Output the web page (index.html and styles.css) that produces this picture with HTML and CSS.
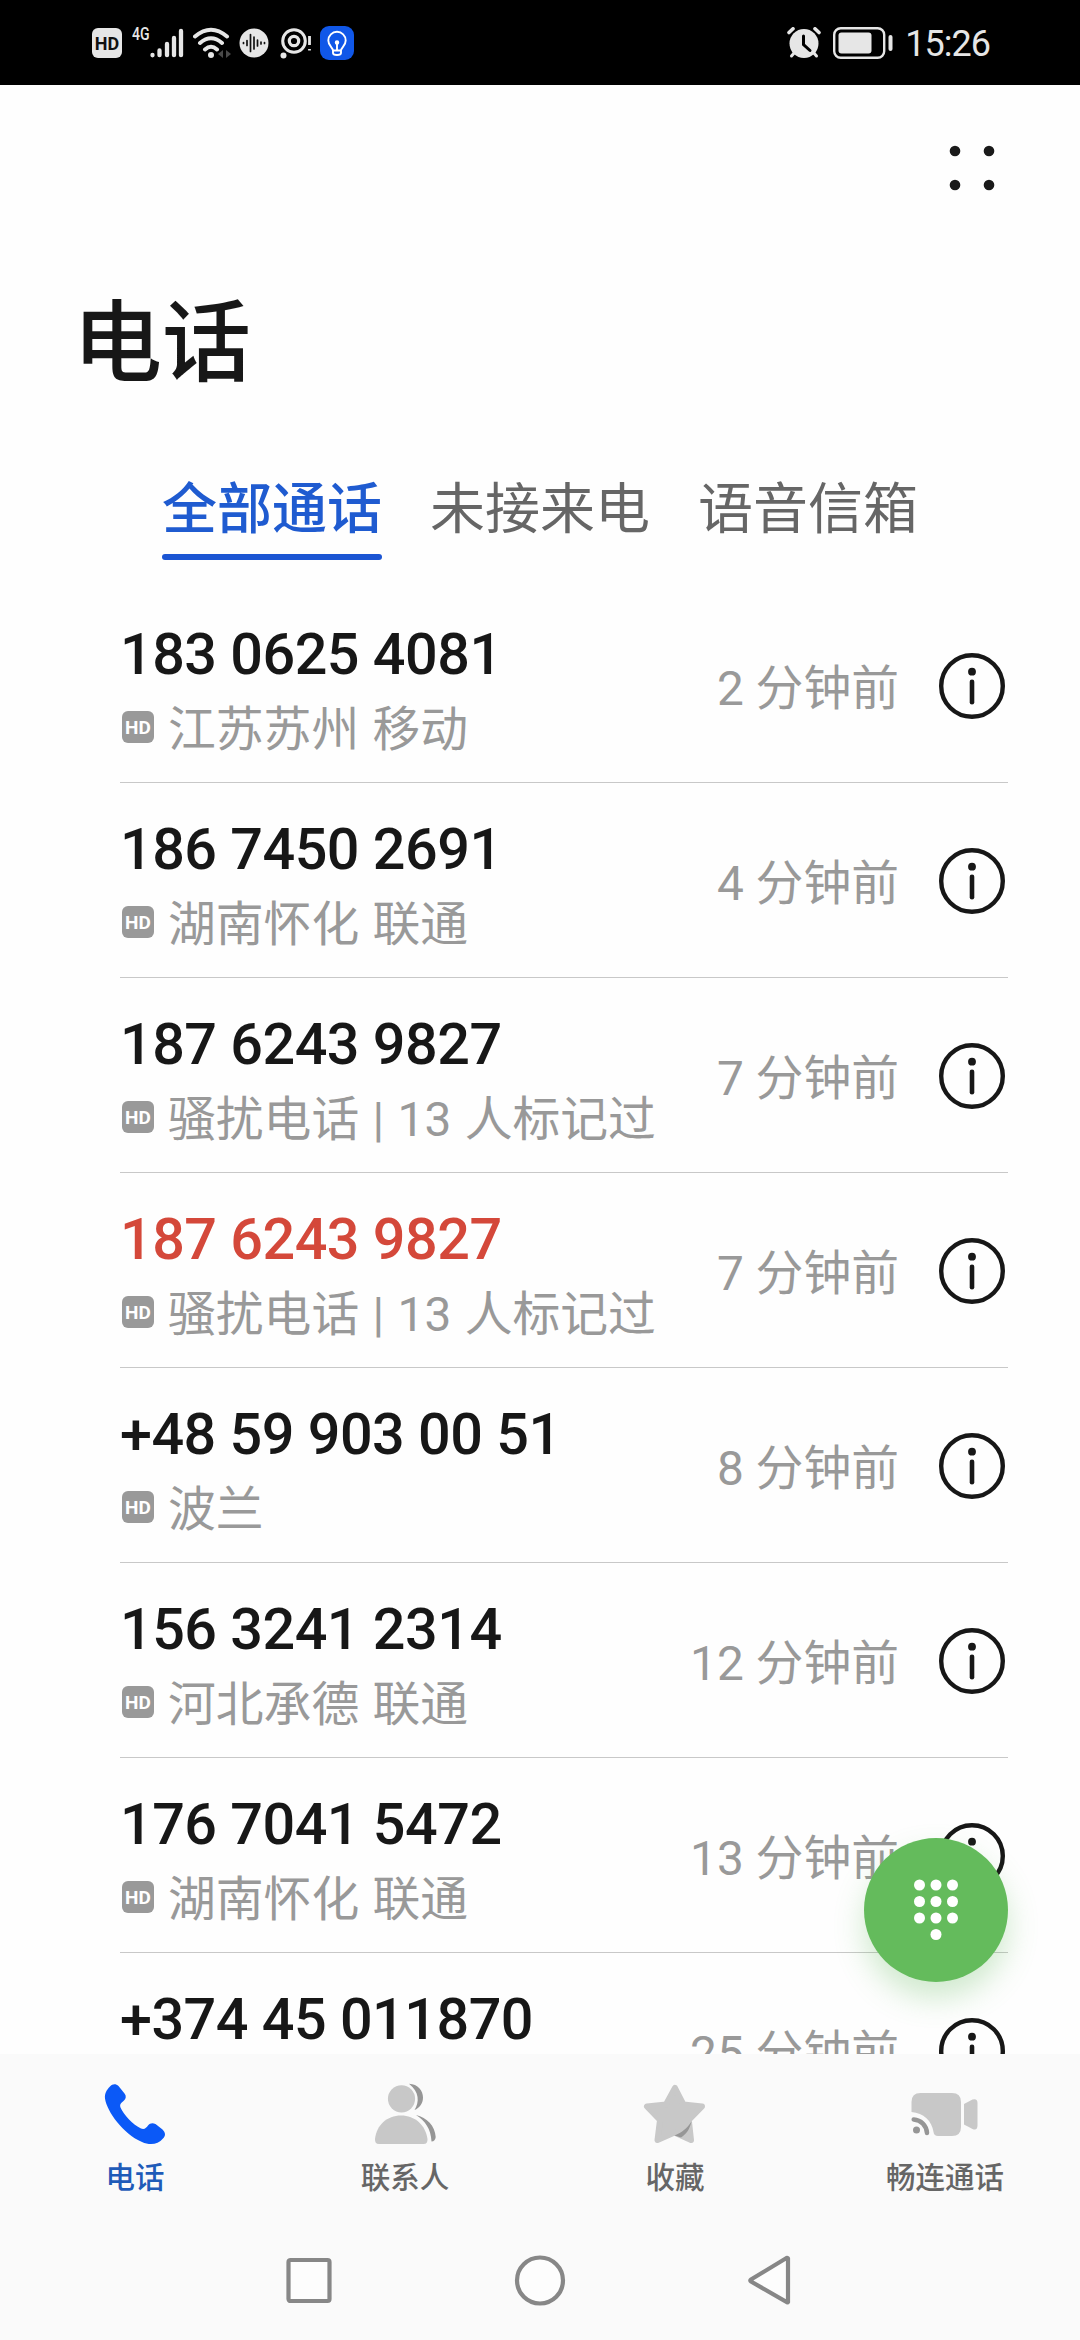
FILE: index.html
```html
<!DOCTYPE html>
<html lang="zh-CN">
<head>
    <meta charset="utf-8"/>
    <title>电话</title>
    <link rel="stylesheet" href="styles.css">
</head>
<body>
<svg class="symbols">
    <symbol id="info" viewBox="0 0 66 66">
        <circle cx="33" cy="33" r="30.8" fill="none" stroke="#171717" stroke-width="4.4"/>
        <circle cx="33" cy="18.7" r="3.9" fill="#171717"/>
        <path d="M33 28.8v20.4" stroke="#171717" stroke-width="4.6" stroke-linecap="round"/>
    </symbol>
</svg>
<div class="phone">
    <div class="status-bar">
        <div class="status-left">
            <span class="status-hd">HD</span>
            <span class="network">4G</span>
            <svg class="signal" width="34" height="32" viewBox="0 0 34 32" stroke="#e6e6e6" stroke-width="4.3" stroke-linecap="round">
                <path d="M2.5 29v.3M9.5 24.500v4.700M17 18v11.200M24 12v17.200M31 5v24.200"/>
            </svg>
            <svg class="wifi" width="40" height="32" viewBox="0 0 40 32" fill="none" stroke="#e6e6e6" stroke-width="4" stroke-linecap="round">
                <path d="M2 9.500Q18 -4 34 9.500M7 16Q18 6.500 29 16M12 22.500Q18 17 24 22.500"/>
                <circle cx="18" cy="28" r="3" fill="#e6e6e6" stroke="none"/>
                <path d="M30 23v8l-5-4zM33 23v8l5-4z" fill="#4a4a4a" stroke="none"/>
            </svg>
            <svg class="wave" width="30" height="30" viewBox="0 0 30 30">
                <circle cx="15" cy="15" r="14.500" fill="#e6e6e6"/>
                <path d="M4.500 14.500v1M8 12.500v5M11.500 6.500v17M15 9v12M18.500 12v6M22 14v2M25.500 14.500v1" stroke="#111" stroke-width="1.700" stroke-linecap="round"/>
            </svg>
            <svg class="eye" width="32" height="32" viewBox="0 0 32 32" fill="none" stroke="#e6e6e6">
                <circle cx="14" cy="14" r="11.300" stroke-width="3"/>
                <circle cx="14" cy="14" r="4.700" stroke-width="3.200"/>
                <circle cx="3.500" cy="28.500" r="3" fill="#e6e6e6" stroke="none"/>
                <path d="M29.500 9v9M29.500 22v1.500" stroke-width="2.800"/>
            </svg>
            <svg class="bulb" width="34" height="34" viewBox="0 0 34 34">
                <rect width="34" height="34" rx="9" fill="#1057e8"/>
                <g fill="none" stroke="#fff" stroke-width="1.900" stroke-linecap="round" stroke-linejoin="round">
                    <path d="M13 24.500c0-3-4.700-4.500-4.700-10a8.700 8.700 0 0 1 17.400 0c0 5.500-4.700 7-4.700 10zM13 24.500v2.500q0 2 4 2t4-2v-2.500M17 17.500v6.500"/>
                    <circle cx="17" cy="16.500" r="1.300" fill="#fff"/>
                </g>
            </svg>
        </div>
        <div class="status-right">
            <svg width="34" height="32" viewBox="0 0 34 32" stroke-linecap="round">
                <path d="M2 5.500l4-3.700M32 5.500l-4-3.700" stroke="#e6e6e6" stroke-width="3.600"/>
                <path d="M8 25l-3.500 4M26 25l3.500 4" stroke="#e6e6e6" stroke-width="3"/>
                <circle cx="17" cy="16.500" r="14.500" fill="#e6e6e6"/>
                <path d="M16.500 9v8.500l6.500 6" fill="none" stroke="#000" stroke-width="3"/>
            </svg>
            <svg width="60" height="34" viewBox="0 0 60 34">
                <rect x="1.200" y="2.200" width="50" height="29.600" rx="6.500" fill="none" stroke="#e6e6e6" stroke-width="2.400"/>
                <rect x="5.500" y="6.500" width="33" height="21" rx="3" fill="#e6e6e6"/>
                <rect x="55.500" y="9" width="4" height="16" rx="2" fill="#e6e6e6"/>
            </svg>
            <span class="clock">15:26</span>
        </div>
    </div>

    <div class="header">
        <svg class="more" width="46" height="46" viewBox="0 0 46 46" fill="#1a1a1a">
            <circle cx="6" cy="6" r="5.300"/>
            <circle cx="40" cy="6" r="5.300"/>
            <circle cx="6" cy="40" r="5.300"/>
            <circle cx="40" cy="40" r="5.300"/>
        </svg>
        <h1>电话</h1>
    </div>

    <div class="tabs">
        <span class="tab active">全部通话</span>
        <span class="tab">未接来电</span>
        <span class="tab">语音信箱</span>
    </div>

    <div class="calls">
        <div class="call">
            <div class="caller">
                <div class="number">183 0625 4081</div>
                <div class="place"><span class="hd">HD</span>江苏苏州 移动</div>
            </div>
            <span class="time">2 分钟前</span>
            <svg class="info"><use href="#info"/></svg>
        </div>
        <div class="call">
            <div class="caller">
                <div class="number">186 7450 2691</div>
                <div class="place"><span class="hd">HD</span>湖南怀化 联通</div>
            </div>
            <span class="time">4 分钟前</span>
            <svg class="info"><use href="#info"/></svg>
        </div>
        <div class="call">
            <div class="caller">
                <div class="number">187 6243 9827</div>
                <div class="place"><span class="hd">HD</span>骚扰电话 | 13 人标记过</div>
            </div>
            <span class="time">7 分钟前</span>
            <svg class="info"><use href="#info"/></svg>
        </div>
        <div class="call missed">
            <div class="caller">
                <div class="number">187 6243 9827</div>
                <div class="place"><span class="hd">HD</span>骚扰电话 | 13 人标记过</div>
            </div>
            <span class="time">7 分钟前</span>
            <svg class="info"><use href="#info"/></svg>
        </div>
        <div class="call">
            <div class="caller">
                <div class="number">+48 59 903 00 51</div>
                <div class="place"><span class="hd">HD</span>波兰</div>
            </div>
            <span class="time">8 分钟前</span>
            <svg class="info"><use href="#info"/></svg>
        </div>
        <div class="call">
            <div class="caller">
                <div class="number">156 3241 2314</div>
                <div class="place"><span class="hd">HD</span>河北承德 联通</div>
            </div>
            <span class="time">12 分钟前</span>
            <svg class="info"><use href="#info"/></svg>
        </div>
        <div class="call">
            <div class="caller">
                <div class="number">176 7041 5472</div>
                <div class="place"><span class="hd">HD</span>湖南怀化 联通</div>
            </div>
            <span class="time">13 分钟前</span>
            <svg class="info"><use href="#info"/></svg>
        </div>
        <div class="call">
            <div class="caller">
                <div class="number">+374 45 011870</div>
            </div>
            <span class="time">25 分钟前</span>
            <svg class="info"><use href="#info"/></svg>
        </div>
        <div class="dial">
            <svg width="46" height="62" viewBox="0 0 46 62" fill="#fff">
                <circle cx="6.500" cy="6" r="5.500"/><circle cx="23" cy="6" r="5.500"/><circle cx="39.500" cy="6" r="5.500"/>
                <circle cx="6.500" cy="22.500" r="5.500"/><circle cx="23" cy="22.500" r="5.500"/><circle cx="39.500" cy="22.500" r="5.500"/>
                <circle cx="6.500" cy="39" r="5.500"/><circle cx="23" cy="39" r="5.500"/><circle cx="39.500" cy="39" r="5.500"/>
                <circle cx="23" cy="55.500" r="5.500"/>
            </svg>
        </div>
    </div>

    <div class="bottom-nav">
        <div class="nav-item active">
            <svg width="72" height="72" viewBox="0 0 72 72">
                <path d="M11 8.500C13.500 5.500 17 5.500 19.500 8L25.500 15.500C27.500 18 27 20.500 25 22.500C22 25 20.500 26 21.500 29.500C25 37.500 34 46.500 42 50.500C45.500 52 47.500 49.500 49 47.500C51 45 53.500 44.500 56.500 46L63.500 51.500C66.500 54.500 67 57.500 64 60.500C59 66.500 51 67.500 43 64C24.500 56 8 34 6 20.500C5.500 15.500 7.500 12 11 8.500Z" fill="#0b59f7"/>
            </svg>
            <span>电话</span>
        </div>
        <div class="nav-item">
            <svg width="72" height="72" viewBox="0 0 72 72">
                <circle cx="32.500" cy="20.800" r="13.600" fill="#c8c8c8"/>
                <path d="M40 5.700C49 6 54 12.500 54 19.500C54 25.500 50.500 30 45.500 32C50.500 24 50.500 14 40 5.700Z" fill="#969696"/>
                <path d="M10 66C7 66 5.800 64 6 61C7.500 47 18 37.500 32 37.500S56.500 47 58.500 61C58.700 64 57.500 66 54.500 66Z" fill="#c8c8c8"/>
                <path d="M47 37C58 39.500 66 48 66.700 59C66.500 61.500 65 63.500 62.500 63.500C62 51 56 42.500 47 37Z" fill="#969696"/>
            </svg>
            <span>联系人</span>
        </div>
        <div class="nav-item">
            <svg width="72" height="72" viewBox="0 0 72 72">
                <path d="M36 10L44.500 26.500L63 28.500L49.800 42L52 62L35.500 54.500L18.500 62L21 42L8 28.500L27 26.500Z" fill="#c8c8c8" stroke="#c8c8c8" stroke-width="6" stroke-linejoin="round"/>
                <path d="M52.500 43.500C48.500 50 43 54.500 35.500 57.500L42 59.500C47 56 50.500 52 52.500 43.500Z" fill="#969696"/>
            </svg>
            <span>收藏</span>
        </div>
        <div class="nav-item">
            <svg width="72" height="72" viewBox="0 0 72 72">
                <path d="M2.500 33V24Q2.500 15 11.500 15H43Q52 15 52 24V49Q52 58 43 58H29Q25 58 24.500 54C23 43 14.500 35 2.500 34Z" fill="#c8c8c8"/>
                <path d="M55 26L63.500 21.500Q68.500 20 68.500 25V47Q68.500 53 63.500 51L55 46.500Z" fill="#c8c8c8"/>
                <path d="M4.700 41.500C12 42 17.500 47.500 18 55" fill="none" stroke="#969696" stroke-width="4.500" stroke-linecap="round"/>
                <circle cx="7.500" cy="52" r="3.500" fill="#969696"/>
            </svg>
            <span>畅连通话</span>
        </div>
    </div>

    <div class="system-nav">
        <svg width="50" height="54" viewBox="0 0 50 54"><rect x="4.500" y="7" width="41" height="41" rx="2"/></svg>
        <svg width="54" height="54" viewBox="0 0 54 54"><circle cx="27" cy="27.500" r="23"/></svg>
        <svg width="50" height="54" viewBox="0 0 50 54"><path d="M42 5.500v43.500q-.5 1-1.500 0L5 28.500q-1.500-1 0-2L40.500 5q1-.5 1.500.5z"/></svg>
    </div>
</div>
</body>
</html>
```
FILE: styles.css
```css
body {
    margin: 0;
    background: #fefefe;
    font-family: Roboto, 'Noto Sans CJK SC', sans-serif;
    color: #171717;
}

svg {
    display: block;
    flex: none;
}

.symbols {
    width: 0;
    height: 0;
    position: absolute;
}

.phone {
    width: 1080px;
    height: 2340px;
    display: flex;
    flex-direction: column;
    overflow: hidden;
}

.status-bar {
    height: 85px;
    padding: 0 90px 0 92px;
    box-sizing: border-box;
    background: #000;
    color: #e6e6e6;
    display: flex;
    justify-content: space-between;
    align-items: center;
    flex: none;
}

.status-left, .status-right {
    display: flex;
    align-items: center;
}

.status-hd {
    width: 30px;
    height: 30px;
    border-radius: 6px;
    background: #e6e6e6;
    color: #111;
    font: 700 18px/31px Roboto, sans-serif;
    text-align: center;
}

.network {
    width: 17px;
    margin: 0 1px 18px 10px;
    font: 500 19px/16px Roboto, sans-serif;
    white-space: nowrap;
    transform: scaleX(0.74);
    transform-origin: left;
}

.signal {
    margin: 0 9px 2px 0;
}

.wifi {
    margin-right: 6px;
}

.wave {
    margin-right: 11px;
}

.eye {
    margin-right: 8px;
}

.status-right {
    gap: 12px;
}

.clock {
    font-size: 36px;
    line-height: 40px;
    letter-spacing: -1px;
    margin-top: 3px;
}

.header {
    height: 375px;
    flex: none;
    display: flex;
    flex-direction: column;
}

.more {
    margin: 60px 85px 0 0;
    align-self: flex-end;
}

.header h1 {
    margin: 88px 0 0 73px;
    font-size: 89px;
    line-height: 130px;
    font-weight: 500;
}

.tabs {
    display: flex;
    justify-content: center;
    gap: 48px;
    height: 128px;
    flex: none;
}

.tab {
    font-size: 55px;
    line-height: 90px;
    padding-top: 4px;
    color: #666;
}

.tab.active {
    color: #1f5bd0;
    font-weight: 500;
}

.tab.active::after {
    content: '';
    display: block;
    height: 6px;
    border-radius: 3px;
    background: #1b55d3;
}

.calls {
    flex: 1;
    min-height: 0;
    padding: 0 72px 0 120px;
    overflow: hidden;
    position: relative;
}

.call {
    height: 195px;
    box-sizing: border-box;
    border-bottom: 1px solid #c8c8c8;
    display: flex;
    align-items: center;
    color: #999;
}

.caller {
    flex: 1;
    height: 158px;
}

.number {
    color: #171717;
    font-size: 57.5px;
    line-height: 68px;
    letter-spacing: -0.5px;
    margin-top: 15px;
    font-weight: 500;
}

.missed .number {
    color: #d4483a;
}

.place {
    display: flex;
    align-items: center;
    font-size: 47.8px;
    line-height: 70px;
    margin-top: 6px;
    word-spacing: 1.5px;
    white-space: pre;
}

.hd {
    width: 32px;
    height: 32px;
    margin: 0 14px 6px 2px;
    border-radius: 6px;
    background: #999;
    color: #fff;
    font-size: 19px;
    line-height: 33px;
    font-weight: 700;
    text-align: center;
}

.time {
    font-size: 47.8px;
    line-height: 66px;
    padding-top: 7px;
}

.info {
    width: 66px;
    height: 66px;
    margin: 2px 3px 0 40px;
}

.dial {
    position: absolute;
    right: 72px;
    bottom: 72px;
    width: 144px;
    height: 144px;
    border-radius: 50%;
    background: #64bb5c;
    box-shadow: 0 16px 30px rgba(100, 187, 92, 0.3);
    display: flex;
    align-items: center;
    justify-content: center;
}

.bottom-nav {
    height: 166px;
    flex: none;
    display: flex;
    background: #fafafa;
}

.nav-item {
    flex: 1;
    display: flex;
    flex-direction: column;
    align-items: center;
    padding-top: 24px;
    font-size: 29.5px;
    line-height: 40px;
    font-weight: 500;
    color: #666;
}

.nav-item span {
    margin-top: 8px;
}

.nav-item.active {
    color: #1f5bb8;
}

.system-nav {
    height: 120px;
    flex: none;
    display: flex;
    justify-content: center;
    gap: 179px;
    padding-top: 33px;
    box-sizing: border-box;
    background: #fafafa;
    fill: #fdfdfd;
    stroke: #878787;
    stroke-width: 4.2;
}
```
